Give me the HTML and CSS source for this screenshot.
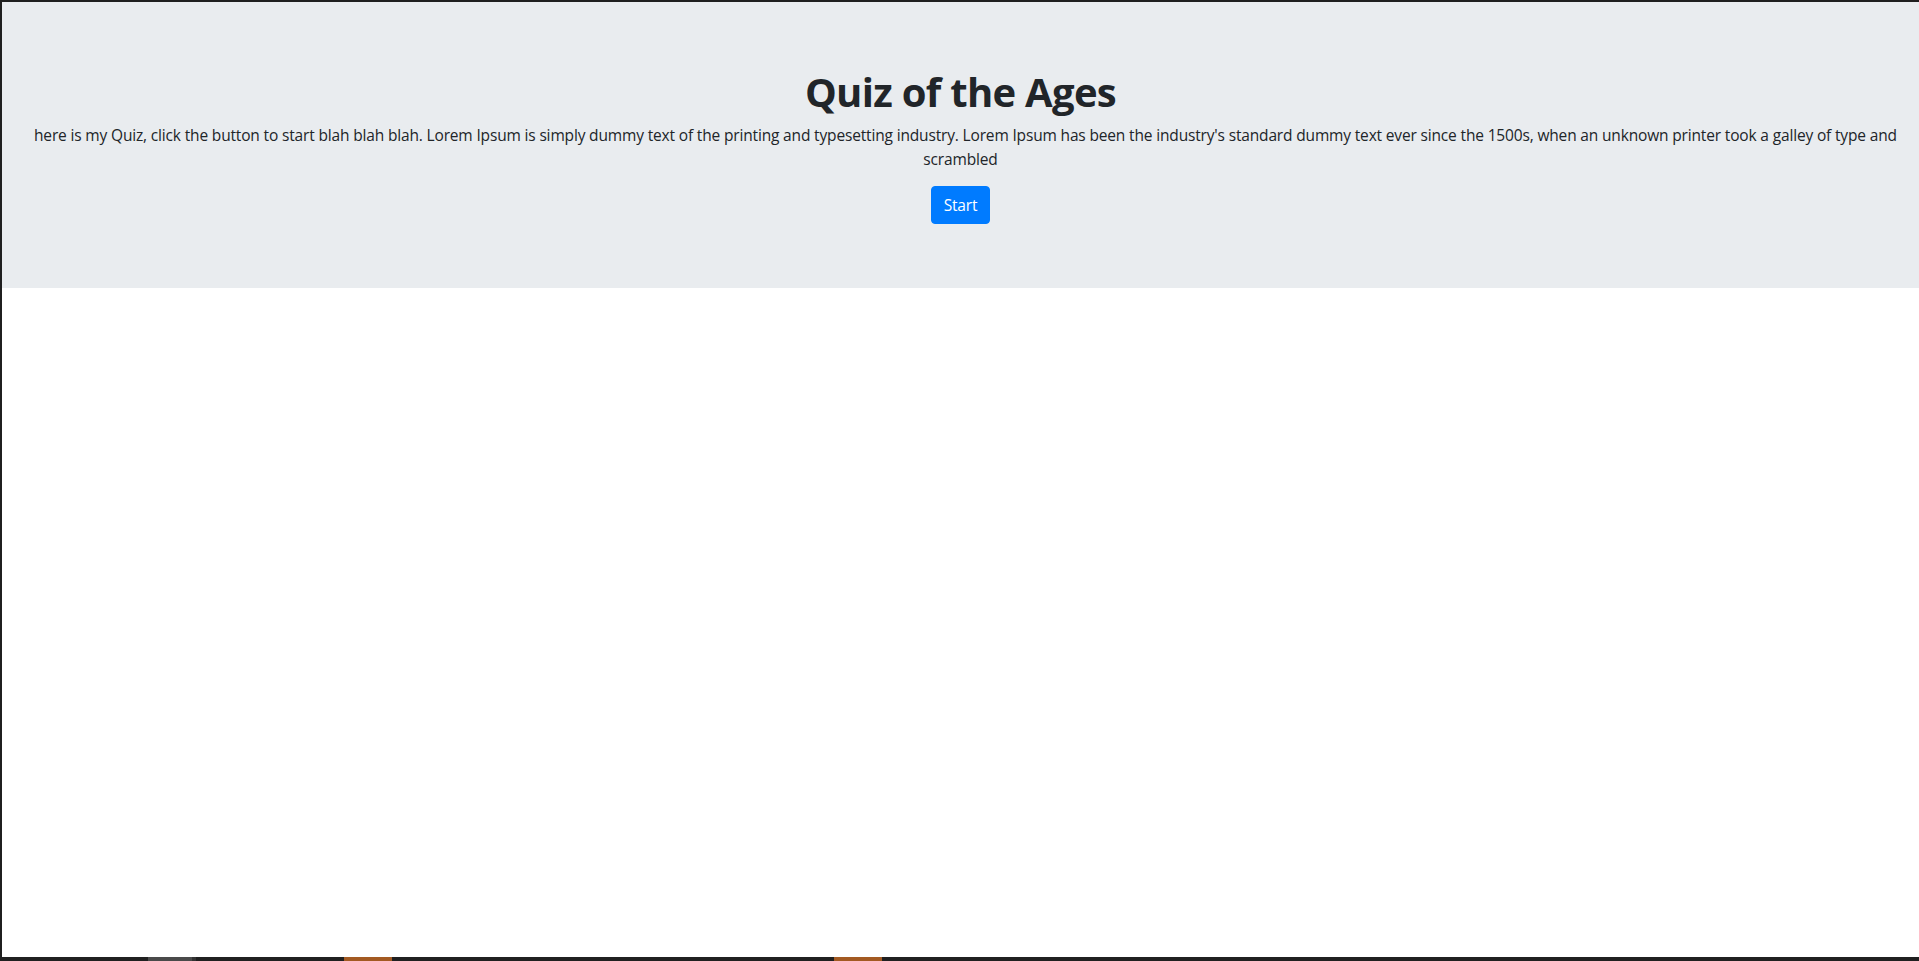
FILE: index.html
```html
<!DOCTYPE html>
<html lang="en">
<head>
<meta charset="utf-8">
<title>Quiz of the Ages</title>
<link rel="stylesheet" href="styles.css">
</head>
<body>
<div class="frame">
  <div class="page">
    <header class="jumbotron">
      <h1 class="title">Quiz of the Ages</h1>
      <p class="lead"><span class="line">here is my Quiz, click the button to start blah blah blah. Lorem Ipsum is simply dummy text of the printing and typesetting industry. Lorem Ipsum has been the industry's standard dummy text ever since the 1500s, when an unknown printer took a galley of type and</span> scrambled</p>
      <button class="btn" type="button">Start</button>
    </header>
  </div>
  <div class="taskbar">
    <span class="seg seg-gray"></span><span class="seg seg-edge"></span>
    <span class="seg seg-orange seg-o1"></span>
    <span class="seg seg-orange seg-o2"></span>
  </div>
</div>
</body>
</html>
```

FILE: styles.css
```css
html, body {
  margin: 0;
  padding: 0;
  height: 100%;
}
body {
  background: #1f1f1f;
  font-family: "Open Sans", "Noto Sans", sans-serif;
  color: #212529;
  overflow: hidden;
}
.frame {
  height: 961px;
  display: flex;
  flex-direction: column;
  box-sizing: border-box;
  border-top: 2px solid #1f1f1f;
  border-left: 2px solid #1f1f1f;
}
.page {
  flex: 1;
  background: #ffffff;
}
.jumbotron {
  background: #e9ecef;
  padding: 64px 32px;
  text-align: center;
}
.title {
  margin: 2px 0 6px;
  font-size: 40px;
  line-height: 48px;
  font-weight: 700;
  letter-spacing: -0.7px;
}
.lead {
  margin: 0 0 16px;
  padding-top: 1px;
  font-size: 15.5px;
  line-height: 24px;
  letter-spacing: -0.16px;
}
.line {
  white-space: nowrap;
}
.btn {
  font-family: inherit;
  font-size: 15.5px;
  line-height: 24px;
  padding: 6px 12px;
  margin-top: -1px;
  border: 1px solid #007bff;
  border-radius: 4px;
  background: #007bff;
  color: #ffffff;
  letter-spacing: -0.2px;
}
.taskbar {
  height: 4px;
  background: #202020;
  display: flex;
  margin-left: -2px;
}
.seg {
  height: 4px;
}
.seg-gray {
  width: 44px;
  margin-left: 148px;
  background: #4a4a4a;
}
.seg-edge {
  width: 4px;
  background: #333333;
}
.seg-orange {
  width: 48px;
  background: #a35a22;
}
.seg-o1 {
  margin-left: 148px;
}
.seg-o2 {
  margin-left: 442px;
}
```
